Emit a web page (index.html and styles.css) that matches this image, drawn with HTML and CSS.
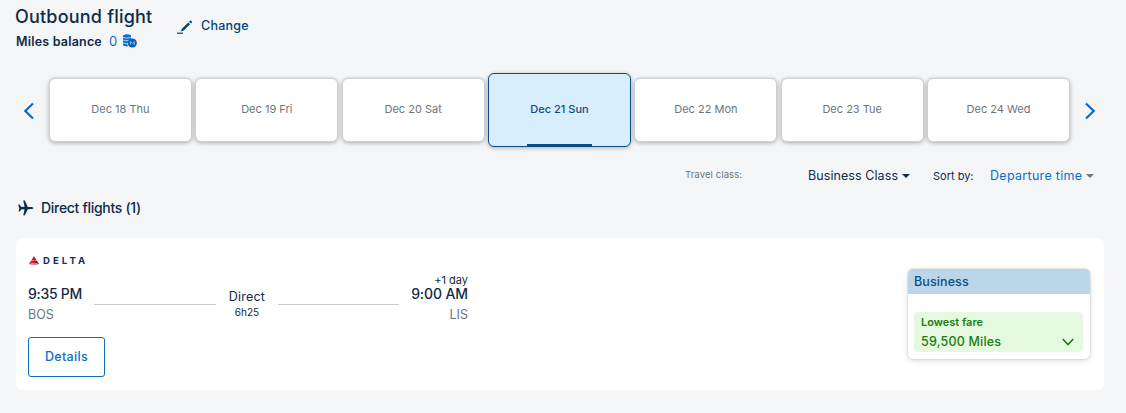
FILE: index.html
```html
<!DOCTYPE html>
<html lang="en">

	<head>
		<meta charset="UTF-8">
		<title>Outbound flight</title>
		<link rel="stylesheet" href="styles.css">
	</head>

	<body>
		<div class="wrap">
			<header class="head">
				<div class="head-info">
					<h1>Outbound flight</h1>
					<div class="balance">
						<b>Miles balance</b>
						<span class="miles">0</span>
						<svg class="coins" width="14" height="14" viewBox="0 0 14 14">
							<path d="M0 1.500Q4 -.8 8 1.500V5L4 9.500 5 12.500Q2 12.500 0 11.300z" fill="#0a6fc9"/>
							<path d="M0 3.300Q4 5 8 3.300M0 6Q3 7.500 6 6.300M0 8.800Q2 10 5 9.500" fill="none" stroke="#f4f5f7" stroke-width=".7"/>
							<circle cx="9.300" cy="9" r="4.600" fill="#0a62b5"/>
							<path d="M7.300 10.800V7.500L9.300 9.600 11.300 7.500V10.800" fill="none" stroke="#a9cdec" stroke-width=".8"/>
						</svg>
					</div>
				</div>
				<a class="change">
					<svg width="16" height="14" viewBox="0 0 16 14">
						<path d="M3.800 11.600L4.900 8.700 11.300 2.400 13.100 4.200 6.700 10.400z" fill="#00447c"/>
						<path d="M12 1.700L13 .7Q13.500 .2 14.100 .7L14.900 1.500Q15.200 2 14.900 2.500L13.900 3.500z" fill="#00447c"/>
						<path d="M0 13.200H6" stroke="#00447c" stroke-width="1.200"/>
					</svg>
					<span>Change</span>
				</a>
			</header>

			<nav class="dates">
				<svg class="arrow" width="12" height="18" viewBox="0 0 12 18"><path d="M10 1.500L2.300 9 10 16.500"/></svg>
				<div class="days">
					<div class="day"><span>Dec 18 Thu</span></div>
					<div class="day"><span>Dec 19 Fri</span></div>
					<div class="day"><span>Dec 20 Sat</span></div>
					<div class="day active"><span>Dec 21 Sun</span></div>
					<div class="day"><span>Dec 22 Mon</span></div>
					<div class="day"><span>Dec 23 Tue</span></div>
					<div class="day"><span>Dec 24 Wed</span></div>
				</div>
				<svg class="arrow" width="12" height="18" viewBox="0 0 12 18"><path d="M2 1.500L9.700 9 2 16.500"/></svg>
			</nav>

			<div class="filters">
				<span class="travel">Travel class:</span>
				<span class="cabin">Business Class</span>
				<i class="caret"></i>
				<span class="sort">Sort by:</span>
				<span class="sort-value">Departure time</span>
				<i class="caret grey"></i>
			</div>

			<div class="group">
				<svg width="16" height="16" viewBox="0 0 16 16">
					<path d="M15.500 8Q15.500 9 13.500 9.100L9.800 9.300 6.800 15.200H5.200L6.600 9.400 3.500 9.200 1.800 11.400H.6L1.300 8.600 .2 4.400H1.500L3.500 6.900 6.600 6.800 5.200 .6H6.800L9.800 6.900 13.500 6.900Q15.500 7.100 15.500 8z" fill="#0f2b46"/>
				</svg>
				<h2>Direct flights (1)</h2>
			</div>

			<section class="card">
				<div class="flight">
					<div class="delta">
						<svg width="12" height="9" viewBox="0 0 12 9">
							<path d="M6 0L9 5 6 4 3 5z" fill="#d0142c"/>
							<path d="M2.700 5.300L6 4.300V6.700L.8 8.300z" fill="#e01933"/>
							<path d="M9.300 5.300L6 4.300V6.700L11.200 8.300z" fill="#8f1530"/>
							<path d="M1.500 8.500L6 7.200 10.500 8.500z" fill="#b01a32"/>
						</svg>
						<span>DELTA</span>
					</div>
					<div class="route">
						<div class="stop">
							<span class="plus"></span>
							<span class="time">9:35 PM</span>
							<span class="code">BOS</span>
						</div>
						<div class="line"></div>
						<div class="middle">
							<span class="direct">Direct</span>
							<span class="duration">6h25</span>
						</div>
						<div class="line"></div>
						<div class="stop end">
							<span class="plus">+1 day</span>
							<span class="time">9:00 AM</span>
							<span class="code">LIS</span>
						</div>
					</div>
					<button class="details">Details</button>
				</div>
				<div class="fare">
					<div class="fare-title">Business</div>
					<div class="fare-box">
						<div>
							<b>Lowest fare</b>
							<span>59,500 Miles</span>
						</div>
						<svg width="12" height="8" viewBox="0 0 12 8"><path d="M.8 1L6 6.500 11.200 1" fill="none" stroke="#1b7d0e" stroke-width="1.600"/></svg>
					</div>
				</div>
			</section>
		</div>
	</body>

</html>
```
FILE: styles.css
```css
* {
	box-sizing: border-box;
}

body {
	margin: 0;
	background: #f4f5f7;
	color: #0f2b46;
	font-family: Inter, "Liberation Sans", sans-serif;
	white-space: nowrap;
}

.wrap {
	width: 1126px;
	height: 413px;
	padding: 0 22px 0 16px;
	overflow: hidden;
}

.head {
	display: flex;
	height: 65px;
}

.head-info {
	width: 161px;
}

h1 {
	margin: 5px 0 0 -1px;
	font: 500 18px/24px Inter, sans-serif;
	letter-spacing: 0.2px;
}

.balance {
	display: flex;
	align-items: center;
	height: 24px;
	font-size: 12.500px;
}

.balance b {
	font-weight: 600;
	letter-spacing: 0.2px;
}

.miles {
	margin: 0 6px 0 7px;
	color: #0a6fc9;
	font-size: 13px;
}

.change {
	display: flex;
	height: 14px;
	margin-top: 20px;
	color: #00447c;
	font: 500 12.500px/14px Inter, sans-serif;
	letter-spacing: 0.25px;
}

.change span {
	margin: -1px 0 0 8px;
}

.dates {
	display: flex;
	height: 90px;
	padding: 8px 8px 0 7px;
}

.days {
	display: flex;
	flex: 1;
	gap: 3.400px;
	margin: 0 14px;
}

.arrow {
	margin-top: 29px;
	fill: none;
	stroke: #0a6bc6;
	stroke-width: 2.200;
}

.day {
	display: flex;
	flex: 1;
	flex-direction: column;
	align-items: center;
	height: 64px;
	margin-top: 5px;
	padding-top: 23px;
	background: #fff;
	border: 1px solid #cdd0d2;
	border-radius: 6px;
	box-shadow: 0 1px 4px rgba(0, 0, 0, .3);
	color: #6c757d;
	font-size: 11px;
	line-height: 15px;
}

.day.active {
	height: 74px;
	margin-top: 0;
	padding-top: 28px;
	background: #d9eefd;
	border-color: #0d4d85;
	color: #0d4d85;
	font-weight: 500;
}

.day.active::after {
	content: "";
	width: 65px;
	height: 2px;
	margin-top: auto;
	background: #0d4d85;
}

.filters {
	display: flex;
	height: 40px;
	padding: 11px 10px 0 669px;
	font-size: 12.500px;
	line-height: 20px;
}

.travel {
	width: 123px;
	color: #6c757d;
	font-size: 9.500px;
	line-height: 18px;
	letter-spacing: 0.1px;
}

.cabin {
	width: 94px;
	letter-spacing: 0.08px;
}

.caret {
	height: 4px;
	margin-top: 8px;
	border: 4px solid transparent;
	border-top-color: #0f2b46;
	border-bottom: 0;
}

.caret.grey {
	border-top-color: #777;
}

.sort {
	width: 57px;
	margin-left: 23px;
	font-size: 11px;
}

.sort-value {
	width: 96px;
	color: #0a6fc9;
	letter-spacing: 0.3px;
}

.group {
	display: flex;
	height: 43px;
	padding: 5px 0 0 2px;
}

h2 {
	margin: 0 0 0 7px;
	font: 500 14px/16px Inter, sans-serif;
	letter-spacing: -0.3px;
}

.card {
	display: flex;
	justify-content: space-between;
	height: 152px;
	padding: 18px 14px 0 12px;
	background: #fff;
	border-radius: 6px;
}

.delta {
	display: flex;
	align-items: center;
	height: 9px;
	color: #0b2f5b;
}

.delta span {
	margin-left: 3px;
	font: 700 9.500px/9px Inter, sans-serif;
	letter-spacing: 3.100px;
}

.route {
	display: flex;
	width: 440px;
	height: 72px;
	padding-top: 9px;
}

.stop {
	display: flex;
	flex-direction: column;
	width: 56px;
}

.end {
	align-items: flex-end;
	width: 59px;
}

.plus {
	height: 13px;
	font-size: 11px;
	line-height: 13px;
}

.time {
	font-size: 14px;
	font-weight: 500;
	line-height: 14px;
	letter-spacing: -0.3px;
}

.end .time {
	letter-spacing: -0.1px;
}

.code {
	margin-top: 4px;
	color: #6c757d;
	font-size: 12.500px;
	line-height: 19px;
}

.line {
	width: 122px;
	height: 1px;
	margin: 30px 10px 0;
	background: #c9cdcd;
}

.middle {
	display: flex;
	flex: 1;
	flex-direction: column;
	align-items: center;
	padding-top: 14px;
}

.middle + .line {
	width: 121px;
}

.direct {
	font-size: 12.500px;
	line-height: 18px;
	letter-spacing: 0.2px;
}

.duration {
	font-size: 10px;
	line-height: 13px;
}

.details {
	width: 77px;
	height: 40px;
	padding: 0 0 1px;
	background: #fff;
	border: 1px solid #0a6fc9;
	border-radius: 3px;
	color: #0a6fc9;
	font: 500 12.500px/16px Inter, sans-serif;
	letter-spacing: 0.3px;
}

.fare {
	width: 182px;
	height: 90px;
	margin-top: 13px;
	border-radius: 5px;
	box-shadow: 0 0 2px rgba(0, 0, 0, .25), 0 2px 6px rgba(0, 0, 0, .12);
	overflow: hidden;
}

.fare-title {
	height: 25px;
	padding-left: 6px;
	background: #bad6e8;
	color: #0d4d85;
	font-size: 12.500px;
	font-weight: 500;
	line-height: 25px;
	letter-spacing: 0.1px;
}

.fare-box {
	display: flex;
	justify-content: space-between;
	height: 40px;
	margin: 18px 7px 0 6px;
	padding: 0 9px 0 7px;
	background: #e4f9e0;
	border-radius: 4px;
	color: #1b7d0e;
}

.fare-box b {
	display: block;
	font-size: 11px;
	font-weight: 600;
	line-height: 20px;
}

.fare-box span {
	display: block;
	font-size: 12.500px;
	font-weight: 500;
	line-height: 19px;
	letter-spacing: 0.2px;
}

.fare-box svg {
	margin-top: 26px;
}
```
